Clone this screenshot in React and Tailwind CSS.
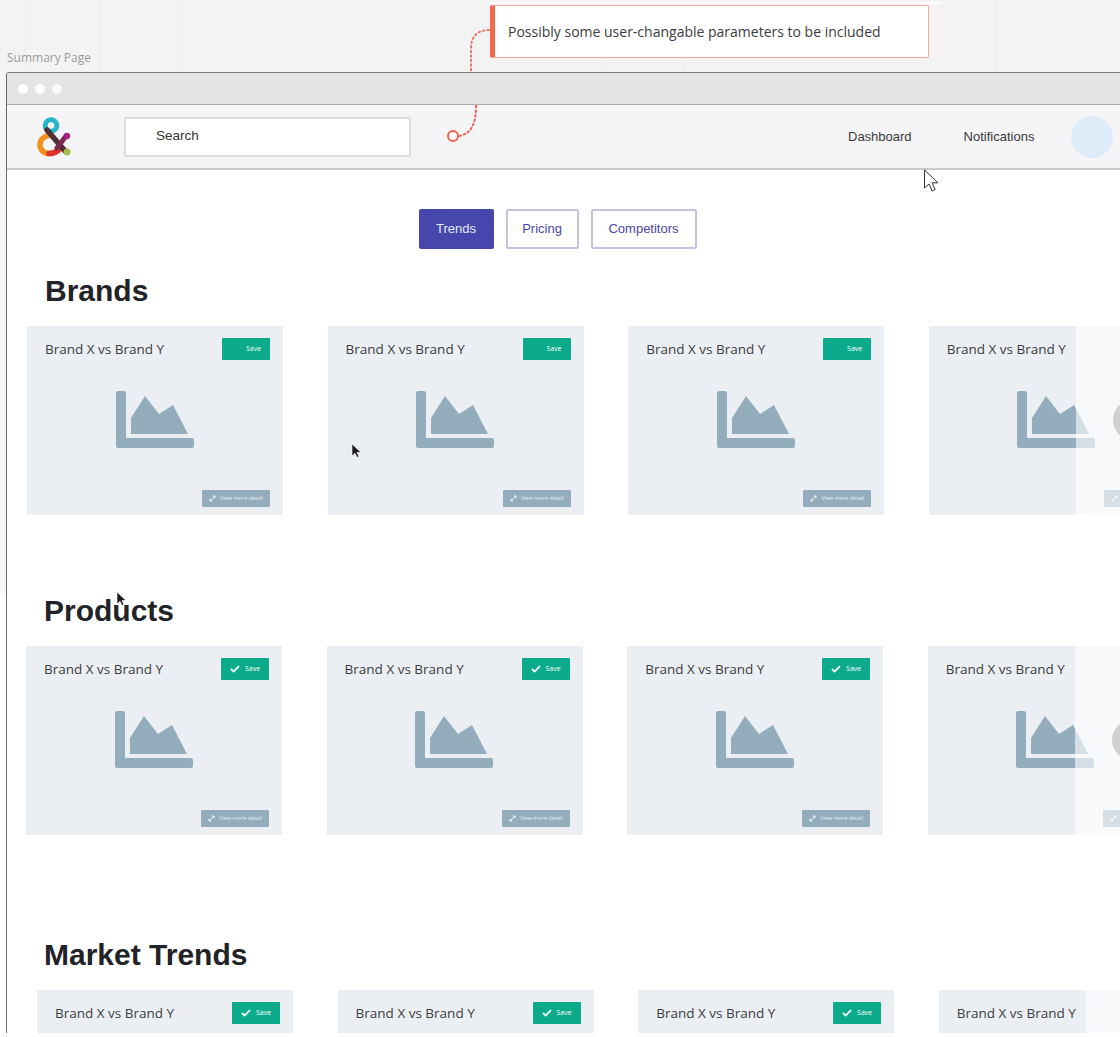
import React from "react";

const sans = "font-['Open_Sans','Noto_Sans',sans-serif]";
const arial = "font-['Liberation_Sans',Arial,sans-serif]";

function ChartIcon() {
  return (
    <svg width="78" height="58" viewBox="0 0 78 58" className="block">
      <path d="M2 0h6a2 2 0 0 1 2 2v45h66a2 2 0 0 1 2 2v6a2 2 0 0 1-2 2H2a2 2 0 0 1-2-2V2a2 2 0 0 1 2-2z" fill="#93adbc" />
      <path d="M15 27 29 5l14 18 14-9 15 29H15z" fill="#93adbc" />
    </svg>
  );
}

function Check() {
  return (
    <svg width="10" height="8" viewBox="0 0 10 8" className="shrink-0">
      <path d="M1 4l2.6 2.6L9 1.2" fill="none" stroke="#fff" strokeWidth="1.8" />
    </svg>
  );
}

function Expand() {
  return (
    <svg width="7" height="7" viewBox="0 0 7 7" className="shrink-0">
      <path d="M1 6 6 1M3.8 1H6v2.2M1 3.8V6h2.2" fill="none" stroke="#fff" strokeWidth="0.9" />
    </svg>
  );
}

function Card({ check }) {
  return (
    <div className="w-[256px] h-[189px] shrink-0 bg-[#ebeff3] flex flex-col">
      <div className="flex items-center justify-between pl-[18px] pr-[13px] pt-[12px]">
        <span className={`${sans} text-[13.5px] leading-[22px] text-[#3b3d40]`}>Brand X vs Brand Y</span>
        <button className={`w-[48px] h-[22px] bg-[#0baa8a] rounded-[1px] flex items-center justify-center gap-[5px] text-white text-[7px] ${sans}`}>
          {check ? <Check /> : <span className="w-[10px]" />}
          <span>Save</span>
        </button>
      </div>
      <div className="flex justify-center mt-[31px] pr-[1px]">
        <ChartIcon />
      </div>
      <div className="flex justify-end pr-[13px] mt-auto pb-[8px]">
        <button className={`w-[68px] h-[17px] bg-[#93adbc] rounded-[1px] flex items-center justify-center gap-[4px] text-[#e8eef2] text-[5.5px] ${sans}`}>
          <Expand />
          <span>View more detail</span>
        </button>
      </div>
    </div>
  );
}

function Row({ check, chevron, className }) {
  return (
    <div className={`relative flex gap-[44.6px] ${className}`}>
      <Card check={check} />
      <Card check={check} />
      <Card check={check} />
      <Card check={check} />
      <div className="absolute top-0 bottom-0 left-[1049px] w-[100px] bg-white/60" />
      {chevron && (
        <div className="absolute top-[74px] left-[1086px] w-[40px] h-[40px] rounded-full bg-[#d0d0d0] flex items-center pl-[14px]">
          <svg width="10" height="13" viewBox="0 0 10 13">
            <path d="M2 1.5 7 6.5 2 11.5" fill="none" stroke="#1a1a1a" strokeWidth="2.6" />
          </svg>
        </div>
      )}
    </div>
  );
}

function Heading({ children, className }) {
  return <h2 className={`${arial} text-[30px] leading-[36px] font-bold text-[#222326] ${className}`}>{children}</h2>;
}

function Logo() {
  return (
    <svg width="36" height="42" viewBox="0 0 36 42" className="block">
      <circle cx="14" cy="9.5" r="5.8" fill="none" stroke="#26b5c6" strokeWidth="5" />
      <path d="M13 19C7 20 3 24 3 29c0 5 4 8.5 9 8.500 3 0 6-1 8-3" fill="none" stroke="#f2901c" strokeWidth="5.500" />
      <path d="M12 37.500c4 0 8-1 11-5" fill="none" stroke="#e0332d" strokeWidth="5.500" strokeLinecap="round" />
      <path d="M10 14 28 35" fill="none" stroke="#4d3038" strokeWidth="5.500" strokeLinecap="round" />
      <path d="M20 32 29 20" fill="none" stroke="#7a2a50" strokeWidth="5" strokeLinecap="round" />
      <circle cx="30" cy="20" r="3.200" fill="#a81f83" />
      <circle cx="30" cy="36" r="3.500" fill="#a4bd4c" />
    </svg>
  );
}

function BlackCursor({ className }) {
  return (
    <svg width="11" height="16" viewBox="0 0 11 16" className={`absolute ${className}`}>
      <path d="M1 1v12l3-2.800 2 4.300 2-1-2-4h4z" fill="#1c1c1c" stroke="#fff" strokeWidth="0.6" />
    </svg>
  );
}

export default function App() {
  return (
    <div className="relative w-[1120px] h-[1037px] overflow-hidden bg-white">
      <div className="relative h-[72px] bg-[#f3f3f4]">
        <svg width="1120" height="72" className="absolute inset-0">
          <path d="M25 0v72M100 0v72M177 0v72M606 0v72M684 0v72M996 0v72" stroke="#eeeeef" strokeWidth="1" />
        </svg>
        <span className={`absolute left-[7px] top-[50px] text-[12px] leading-[16px] text-[#9b9b9b] ${sans}`}>Summary Page</span>
      </div>

      <div className="absolute left-0 top-[72px] w-[6px] h-[521px] bg-[#f6f6f7]" />

      <div className="relative ml-[6px] w-[1114px] h-[961px] overflow-hidden border-l border-l-[#6b6b6b] border-t border-t-[#7a7a7a] rounded-tl-[3px] bg-white">
        <div className="h-[32px] bg-[#e4e4e6] border-b border-b-[#a9a9ab] flex items-center gap-[7px] pl-[11px]">
          <span className="w-[10px] h-[10px] rounded-full bg-white" />
          <span className="w-[10px] h-[10px] rounded-full bg-white/90" />
          <span className="w-[10px] h-[10px] rounded-full bg-white/80" />
        </div>
        <div className="h-[65px] bg-[#f5f5f7] border-b-2 border-b-[#c9c9cb] flex items-center">
          <div className="ml-[30px] w-[36px]"><Logo /></div>
          <div className={`ml-[51px] w-[287px] h-[40px] bg-white border-2 border-[#dcdcde] rounded-[2px] flex items-center pl-[30px] text-[13.5px] text-[#333] ${arial}`}>
            Search
          </div>
          <span className={`ml-[437px] text-[13px] text-[#3a3a3a] ${arial}`}>Dashboard</span>
          <span className={`ml-[52px] text-[13px] text-[#3a3a3a] ${arial}`}>Notifications</span>
          <span className="ml-[37px] w-[42px] h-[42px] rounded-full bg-[#deebf8]" />
        </div>

        <div className={`flex justify-center gap-[12px] pt-[39px] pr-[12px] text-[13px] ${arial}`}>
          <button className="w-[75px] h-[40px] rounded-[2px] bg-[#4547ad] text-[#e6e7f6]">Trends</button>
          <button className="w-[73px] h-[40px] rounded-[2px] bg-white border-2 border-[#c3c1de] text-[#4a46a8]">Pricing</button>
          <button className="w-[106px] h-[40px] rounded-[2px] bg-white border-2 border-[#c3c1de] text-[#4a46a8]">Competitors</button>
        </div>

        <Heading className="mt-[24px] ml-[38px]">Brands</Heading>
        <Row className="mt-[17px] ml-[20px]" chevron />

        <Heading className="mt-[78px] ml-[37px]">Products</Heading>
        <Row className="mt-[17px] ml-[19px]" check chevron />

        <Heading className="mt-[102px] ml-[37px]">Market Trends</Heading>
        <Row className="mt-[17px] ml-[30px]" check />
      </div>

      <div className={`absolute left-[490px] top-[5px] w-[439px] h-[53px] bg-white border border-[#f6a79d] border-l-[5px] border-l-[#f4694c] rounded-[2px] flex items-center pl-[13px] text-[14px] text-[#3c3c3e] ${sans}`}>
        Possibly some user-changable parameters to be included
      </div>
      <div className="absolute left-[490px] top-[2px] w-[452px] h-[2px] bg-white" />

      <svg width="60" height="140" viewBox="0 0 60 140" className="absolute left-[440px] top-[20px] pointer-events-none">
        <path d="M49 10C38 10 31 16 31 28V51" fill="none" stroke="#e9786a" strokeWidth="2" strokeDasharray="1.500 3" strokeLinecap="round" />
        <path d="M36 86c0 20-6 28-17 30" fill="none" stroke="#e9604c" strokeWidth="2" strokeDasharray="1.500 3" strokeLinecap="round" />
        <circle cx="13" cy="116" r="5" fill="#fff" stroke="#f0604a" strokeWidth="2" />
      </svg>

      <svg width="17" height="24" viewBox="0 0 17 24" className="absolute left-[923px] top-[169px]">
        <path d="M1.500 1v18l4.500-4 3.200 7 3-1.400-3.200-6.800h6z" fill="#fff" stroke="#333" strokeWidth="1" />
      </svg>
      <BlackCursor className="left-[351px] top-[443px]" />
      <BlackCursor className="left-[116px] top-[591px]" />
    </div>
  );
}
